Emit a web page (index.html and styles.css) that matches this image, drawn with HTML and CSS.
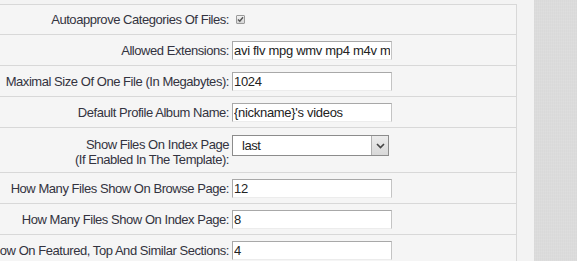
FILE: index.html
```html
<!DOCTYPE html>
<html lang="en">
<head>
    <meta charset="UTF-8">
    <title>Video Settings</title>
    <link rel="stylesheet" href="styles.css">
</head>
<body>
    <div class="page">
        <div class="main">
            <form class="settings">
                <div class="row">
                    <div class="label"><span>Autoapprove Categories Of Files:</span></div>
                    <div class="field">
                        <span class="check">
                            <svg width="7" height="7" viewBox="0 0 7 7"><path d="M1 3.5 L2.8 5.3 L6 1.2" fill="none" stroke="#555" stroke-width="1.4"/></svg>
                        </span>
                    </div>
                </div>
                <div class="row">
                    <div class="label"><span>Allowed Extensions:</span></div>
                    <div class="field"><input type="text" value="avi flv mpg wmv mp4 m4v mov"></div>
                </div>
                <div class="row">
                    <div class="label"><span>Maximal Size Of One File (In Megabytes):</span></div>
                    <div class="field"><input type="text" value="1024"></div>
                </div>
                <div class="row">
                    <div class="label"><span>Default Profile Album Name:</span></div>
                    <div class="field"><input type="text" value="{nickname}'s videos"></div>
                </div>
                <div class="row tall">
                    <div class="label"><span>Show Files On Index Page<br>(If Enabled In The Template):</span></div>
                    <div class="field">
                        <div class="select">
                            <span class="select-value">last</span>
                            <span class="select-arrow">
                                <svg width="9" height="6" viewBox="0 0 9 6"><path d="M1 1 L4.5 4.5 L8 1" fill="none" stroke="#444" stroke-width="1.6"/></svg>
                            </span>
                        </div>
                    </div>
                </div>
                <div class="row">
                    <div class="label"><span>How Many Files Show On Browse Page:</span></div>
                    <div class="field"><input type="text" value="12"></div>
                </div>
                <div class="row">
                    <div class="label"><span>How Many Files Show On Index Page:</span></div>
                    <div class="field"><input type="text" value="8"></div>
                </div>
                <div class="row">
                    <div class="label"><span>How Many Files Show On Featured, Top And Similar Sections:</span></div>
                    <div class="field"><input type="text" value="4"></div>
                </div>
            </form>
        </div>
        <div class="sidebar"></div>
    </div>
</body>
</html>
```

FILE: styles.css
```css
/* Reset */
* {
    margin: 0;
    padding: 0;
    box-sizing: border-box;
}

body {
    width: 577px;
    height: 261px;
    overflow: hidden;
    background: #f3f3f3;
    font-family: Arial, "Liberation Sans", sans-serif;
    font-size: 13px;
    letter-spacing: -0.45px;
    color: #333340;
}

.page {
    display: flex;
    height: 261px;
}

/* Content column */
.main {
    width: 534px;
    padding-top: 4px;
    background: #f3f3f3;
}

.settings {
    width: 517px;
    height: 100%;
    border-right: 1px solid #d8d8d8;
    background: #f5f5f5;
}

/* Rows */
.row {
    display: grid;
    grid-template-columns: 229px 1fr;
    column-gap: 3px;
    border-top: 1px solid #d8d8d8;
    padding: 6px 0 5px;
}

.row:first-child {
    padding: 5px 0 5px;
}

.row.tall {
    padding: 7px 0 5px;
}

.label {
    display: flex;
    justify-content: flex-end;
    white-space: nowrap;
    text-align: right;
    line-height: 19px;
}

.row.tall .label {
    line-height: 15px;
    padding-top: 2px;
    height: 32px;
}

.field {
    display: flex;
    align-items: center;
}

.row.tall .field {
    align-items: flex-start;
}

/* Inputs */
.field input {
    width: 160px;
    height: 19px;
    padding: 0 1px;
    border: 1px solid #a8a8a8;
    border-right-color: #c4c4c4;
    border-bottom-color: #ececec;
    background: #fff;
    font-family: Arial, "Liberation Sans", sans-serif;
    font-size: 13px;
    letter-spacing: -0.3px;
    color: #222;
    outline: none;
}

/* Checkbox */
.check {
    display: flex;
    align-items: center;
    justify-content: center;
    width: 9px;
    height: 9px;
    margin-left: 4px;
    border: 1px solid #9a9a9a;
    border-radius: 1px;
    background: linear-gradient(#f2f2f2, #d6d6d6);
}

/* Select */
.select {
    display: flex;
    width: 157px;
    height: 21px;
    border: 1px solid #8c8c8c;
    background: #fff;
}

.select-value {
    flex: 1;
    padding-left: 9px;
    line-height: 19px;
    color: #222;
}

.select-arrow {
    display: flex;
    align-items: center;
    justify-content: center;
    width: 17px;
    border-left: 1px solid #b0b0b0;
    background: linear-gradient(#ececec, #d8d8d8);
}

/* Right textured column */
.sidebar {
    flex: 1;
    background-color: #dcdcdc;
    background-image:
        repeating-linear-gradient(0deg, rgba(255, 255, 255, 0.06) 0 1px, transparent 1px 3px),
        repeating-linear-gradient(90deg, rgba(0, 0, 0, 0.015) 0 1px, transparent 1px 2px);
}
```
